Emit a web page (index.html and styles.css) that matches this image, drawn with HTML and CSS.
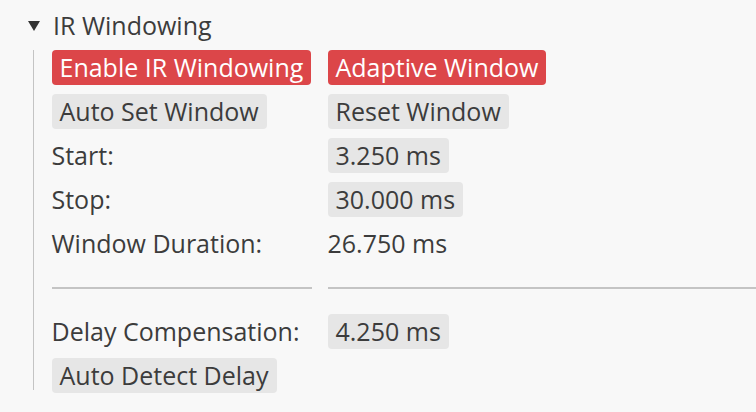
FILE: index.html
```html
<!DOCTYPE html>
<html>
<head>
<meta charset="utf-8">
<link rel="stylesheet" href="styles.css">
</head>
<body>
<div class="panel">
  <div class="header">
    <span class="tri"></span>
    <span class="title">IR Windowing</span>
  </div>
  <div class="body">
    <div class="grid">
      <div class="cell"><span class="btn on">Enable IR Windowing</span></div>
      <div class="cell"><span class="btn on">Adaptive Window</span></div>
      <div class="cell"><span class="btn">Auto Set Window</span></div>
      <div class="cell"><span class="btn">Reset Window</span></div>
      <div class="cell"><span class="label">Start:</span></div>
      <div class="cell"><span class="btn">3.250 ms</span></div>
      <div class="cell"><span class="label">Stop:</span></div>
      <div class="cell"><span class="btn">30.000 ms</span></div>
      <div class="cell"><span class="label">Window Duration:</span></div>
      <div class="cell"><span class="label">26.750 ms</span></div>
      <div class="cell sep"><span class="rule"></span></div>
      <div class="cell sep"><span class="rule"></span></div>
      <div class="cell"><span class="label">Delay Compensation:</span></div>
      <div class="cell"><span class="btn">4.250 ms</span></div>
      <div class="cell"><span class="btn">Auto Detect Delay</span></div>
      <div class="cell"></div>
    </div>
  </div>
</div>
</body>
</html>
```
FILE: styles.css
```css
html, body {
  margin: 0;
  padding: 0;
  background: #f8f8f8;
}
body {
  font-family: "Open Sans", "Noto Sans", sans-serif;
  font-size: 25px;
  color: #3c3c3c;
  width: 756px;
  height: 412px;
  overflow: hidden;
}
.header {
  height: 50px;
  display: flex;
  align-items: center;
  padding-left: 28px;
}
.tri {
  width: 0;
  height: 0;
  border-left: 6px solid transparent;
  border-right: 6px solid transparent;
  border-top: 10px solid #333;
  margin-right: 13px;
  margin-top: 2px;
}
.title {
  line-height: 35px;
}
.body {
  margin-left: 33px;
  border-left: 1.5px solid #c4c4c4;
  padding-left: 17.5px;
  height: 340px;
}
.grid {
  display: grid;
  grid-template-columns: 260px 1fr;
  grid-auto-rows: 35px;
  column-gap: 16px;
  row-gap: 9px;
}
.cell {
  display: flex;
  align-items: center;
}
.btn {
  height: 35px;
  line-height: 35px;
  padding: 0 8px;
  background: #e6e6e6;
  border-radius: 4px;
  white-space: nowrap;
}
.btn.on {
  background: #dc4649;
  color: #fff;
}
.label {
  line-height: 35px;
  white-space: nowrap;
}
.rule {
  display: block;
  width: 100%;
  height: 2px;
  background: #c4c4c4;
}
```
